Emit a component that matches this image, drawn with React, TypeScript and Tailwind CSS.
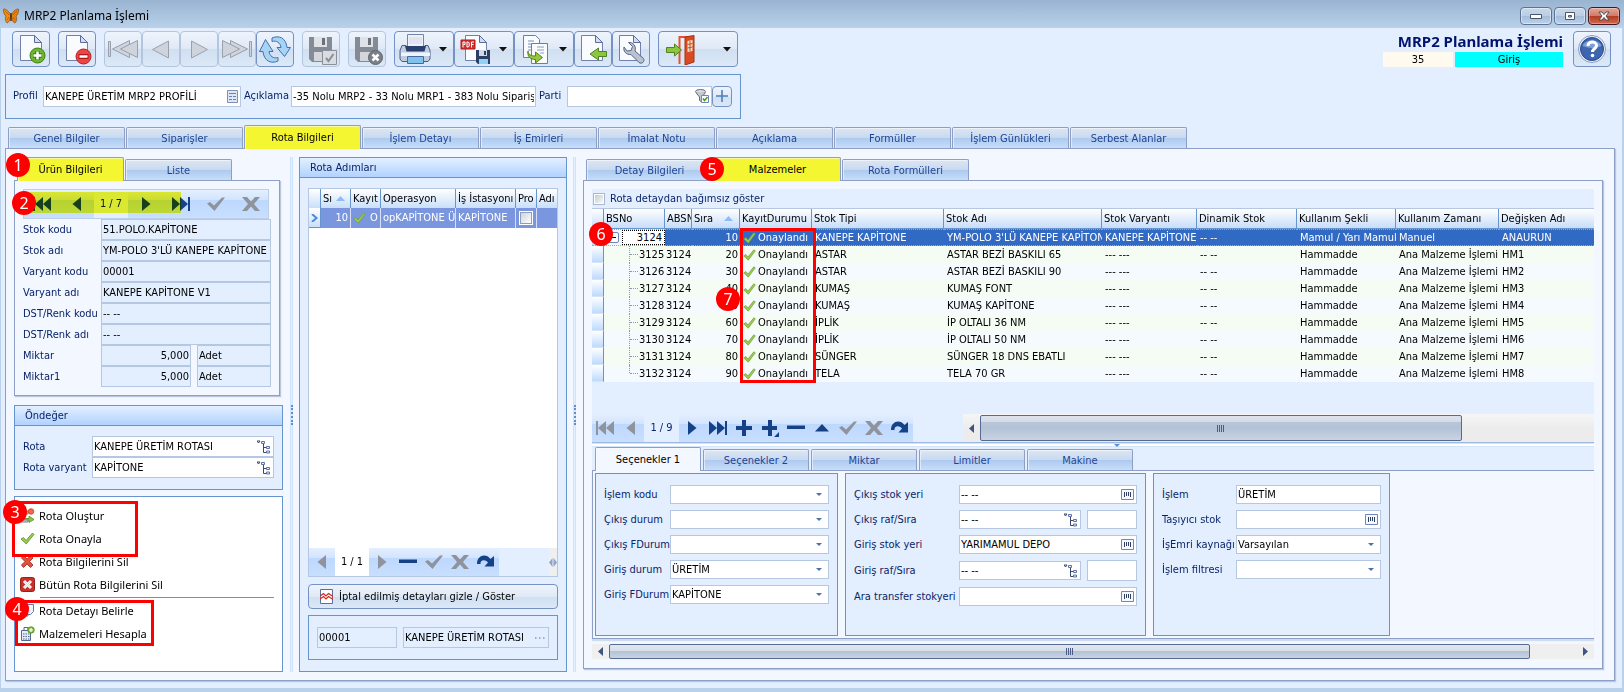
import { useId } from "react";
import type { ReactNode } from "react";

const MAIN_TABS = [
  "Genel Bilgiler",
  "Siparişler",
  "Rota Bilgileri",
  "İşlem Detayı",
  "İş Emirleri",
  "İmalat Notu",
  "Açıklama",
  "Formüller",
  "İşlem Günlükleri",
  "Serbest Alanlar",
];

const PRODUCT_FIELDS = [
  { label: "Stok kodu", value: "51.POLO.KAPİTONE" },
  { label: "Stok adı", value: "YM-POLO 3'LÜ KANEPE KAPİTONE" },
  { label: "Varyant kodu", value: "00001" },
  { label: "Varyant adı", value: "KANEPE KAPİTONE V1" },
  { label: "DST/Renk kodu", value: "-- --" },
  { label: "DST/Renk adı", value: "-- --" },
  { label: "Miktar", value: "5,000", unit: "Adet" },
  { label: "Miktar1", value: "5,000", unit: "Adet" },
];

const COLUMNS = [
  { label: "BSNo", width: "w-[61px]" },
  { label: "ABSN", width: "w-[27px]" },
  { label: "Sıra", width: "w-[48px]", sorted: true },
  { label: "KayıtDurumu", width: "w-[72px]" },
  { label: "Stok Tipi", width: "w-[132px]" },
  { label: "Stok Adı", width: "w-[158px]" },
  { label: "Stok Varyantı", width: "w-[95px]" },
  { label: "Dinamik Stok", width: "w-[100px]" },
  { label: "Kullanım Şekli", width: "w-[99px]" },
  { label: "Kullanım Zamanı", width: "w-[103px]" },
  { label: "Değişken Adı", width: "" },
];

const MATERIALS = [
  { no: "3125", order: 20, type: "ASTAR", name: "ASTAR BEZİ BASKILI 65", variable: "HM1" },
  { no: "3126", order: 30, type: "ASTAR", name: "ASTAR BEZİ BASKILI 90", variable: "HM2" },
  { no: "3127", order: 40, type: "KUMAŞ", name: "KUMAŞ FONT", variable: "HM3" },
  { no: "3128", order: 50, type: "KUMAŞ", name: "KUMAŞ KAPİTONE", variable: "HM4" },
  { no: "3129", order: 60, type: "İPLİK", name: "İP OLTALI 36 NM", variable: "HM5" },
  { no: "3130", order: 70, type: "İPLİK", name: "İP OLTALI 50 NM", variable: "HM6" },
  { no: "3131", order: 80, type: "SÜNGER", name: "SÜNGER 18 DNS EBATLI", variable: "HM7" },
  { no: "3132", order: 90, type: "TELA", name: "TELA 70 GR", variable: "HM8" },
];

/* ---------- icons ---------- */

function Svg({ w, h = w, children }: { w: number; h?: number; children: ReactNode }) {
  return (
    <svg width={w} height={h} viewBox={`0 0 ${w} ${h}`} className="shrink-0" aria-hidden="true">
      {children}
    </svg>
  );
}

function ButterflyIcon() {
  return (
    <Svg w={16}>
      <path d="M7.5 7C6 3 3 .8.6 1c-.4 3 .6 6.200 2.400 7C1.800 9.800 2.200 13.500 4 15c2-.6 3.200-3.500 3.500-6z" fill="#f08c10" stroke="#7a3c08" strokeWidth=".6" />
      <path d="M8.500 7C10 3 13 .8 15.400 1c.4 3-.6 6.200-2.400 7 1.200 1.800.8 5.500-1 7-2-.6-3.200-3.500-3.500-6z" fill="#e88010" stroke="#7a3c08" strokeWidth=".6" />
      <path d="M2 3l4 4M14 3l-4 4M4 12l2-3M12 12l-2-3" stroke="#c4610c" />
      <path d="M8 5v8" stroke="#4a2404" strokeWidth="1.400" />
    </Svg>
  );
}

function Page({ x = 0 }: { x?: number }) {
  return (
    <g transform={`translate(${x} 0)`}>
      <path d="M5.500 2.500h14l7 7v18h-21z" fill="#f9fbff" stroke="#7181ab" />
      <path d="M19.500 2.500v7h7z" fill="#d5dded" stroke="#5c6d9c" strokeLinejoin="round" />
    </g>
  );
}

function AddPageIcon() {
  return (
    <Svg w={32}>
      <Page />
      <circle cx="22.500" cy="22.500" r="7.500" fill="#6fb52d" stroke="#3e7d14" />
      <path d="M22.500 18v9M18 22.500h9" stroke="#3e7d14" strokeWidth="4.500" />
      <path d="M22.500 18.500v8M18.500 22.500h8" stroke="#fff" strokeWidth="2.500" />
    </Svg>
  );
}

function RemovePageIcon() {
  return (
    <Svg w={32}>
      <Page />
      <circle cx="22.500" cy="23.500" r="7.500" fill="#ef4444" stroke="#b81e1e" />
      <path d="M17.500 23.500h10" stroke="#b01818" strokeWidth="5" />
      <path d="M18.500 23.500h8" stroke="#fff" strokeWidth="2.500" />
    </Svg>
  );
}

function SeekIcon({ kind }: { kind: "first" | "prev" | "next" | "last" }) {
  const flip = kind === "next" || kind === "last";
  const double = kind === "first" || kind === "last";
  return (
    <Svg w={32}>
      <g transform={flip ? "translate(32 0) scale(-1 1)" : undefined} fill="#cfd4dc" stroke="#9aa0ad" strokeLinejoin="round">
        {double ? (
          <>
            <path d="M1.500 8.500h2v15h-2z" />
            <path d="M22.500 7.500v17l-17-8.500z" />
            <path d="M30.500 7.500v17l-17-8.500z" />
          </>
        ) : (
          <path d="M23.500 8v17L7.500 16.500z" />
        )}
      </g>
    </Svg>
  );
}

function RefreshIcon() {
  return (
    <Svg w={32}>
      <g fill="#a9d3f2" stroke="#3f72b5" strokeLinejoin="round">
        <path d="M13 5c6.500-3 14-.500 15 9.500h3.500l-6 9-7.500-9h4c-.5-4.500-4.500-7.500-9-6z" />
        <path d="M19 28c-6.500 3-14 .5-15-9.500H.5l6-12 7.500 12h-4c.5 4.500 4.500 7.500 9 6z" />
      </g>
    </Svg>
  );
}

function DisabledSaveIcon({ cancel }: { cancel?: boolean }) {
  return (
    <Svg w={32}>
      <path d="M4 4h23v25H7l-3-3z" fill="#858b95" />
      <path d="M9 4h13v10H9z" fill="#dfe2e7" />
      <path d="M17 5h3v7h-3z" fill="#6c727c" />
      <path d="M9 19h14v9H9z" fill="#d3d7dd" />
      {cancel ? (
        <>
          <circle cx="24.500" cy="24.500" r="7" fill="#7b7f87" stroke="#62666e" />
          <path d="M21.500 21.500l6 6M27.500 21.500l-6 6" stroke="#fff" strokeWidth="2.500" />
        </>
      ) : (
        <>
          <path d="M17.500 17.500h14v14h-14z" fill="#d9dce1" stroke="#8a8f98" />
          <path d="M21 25l2.500 3 5-7" fill="none" stroke="#8a8f98" strokeWidth="2" />
        </>
      )}
    </Svg>
  );
}

function PrinterIcon() {
  return (
    <Svg w={32}>
      <path d="M8.500 1.500h16v13h-16z" fill="#eef1f8" stroke="#7483a8" />
      <path d="M10 4h13v7H10z" fill="#dfe4f0" />
      <path d="M3 12.500h4l1 4h17l1-4h3l2 5v8.500l-2 2.500H3l-2-2.500v-8.500z" fill="#c2ccdf" stroke="#4b5d87" />
      <path d="M6 13h21l-1.500 5.500H7.500z" fill="#28406f" />
      <path d="M2 19.500h29v3.500H2z" fill="#eff3fa" />
      <path d="M8.500 23.500h16v7h-16z" fill="#7fc2ee" stroke="#47689c" />
    </Svg>
  );
}

function PdfSaveIcon() {
  return (
    <Svg w={32}>
      <Page x={1} />
      <path d="M2 7h14v9H2z" fill="#d7302c" stroke="#a81a18" />
      <path d="M4 14.500v-5.500h2v2.500H4.500M8 9v5h1.200l1-1v-3l-1-1zM12.500 14.500V9H15M12.500 11.500h2" fill="none" stroke="#fff" />
      <path d="M17 17h14v14H19l-2-2z" fill="#2b3f66" />
      <path d="M20 17h8v6h-8z" fill="#cfd9ea" />
      <path d="M25 18h2v4h-2z" fill="#2b3f66" />
      <path d="M20 26h9v5h-9z" fill="#8fd0f5" />
    </Svg>
  );
}

function CopyIcon() {
  return (
    <Svg w={32}>
      <path d="M4.500 2.500h12l4 4v18h-16z" fill="#f9fbff" stroke="#6c7dab" />
      <path d="M9 8h6M9 11h6M9 14h6M9 17h6" stroke="#7d8fb8" />
      <path d="M12.500 10.500h16v20h-16z" fill="#f9fbff" stroke="#6c7dab" />
      <path d="M18 14h7M18 17h7M21 20h4" stroke="#8b9bc2" />
      <path d="M9 18c0 3.500 3 5 7.500 5v-4l7 5.500-7 5.500v-3.500c-5 0-8.500-3-7.500-8.500z" fill="#97c83a" stroke="#56851a" strokeLinejoin="round" />
    </Svg>
  );
}

function ImportIcon() {
  return (
    <Svg w={32}>
      <Page x={-1} />
      <path d="M13 21l8.500-6v3.500h8v5h-8V27z" fill="#8cc63f" stroke="#4f8320" strokeLinejoin="round" />
    </Svg>
  );
}

function WrenchIcon() {
  return (
    <Svg w={32}>
      <Page x={-1} />
      <path d="M9 14c-1 4 2 8 7 7.500l8 8c3 2 6-1 4.500-4l-8.500-7.500c1.500-5-2-9-6.500-8.500l4 4-1.500 4-4 .5z" fill="#b9c2d3" stroke="#56637f" strokeLinejoin="round" />
    </Svg>
  );
}

function ExitIcon() {
  return (
    <Svg w={32}>
      <path d="M14.500 31V4h13" fill="none" stroke="#e2552e" strokeWidth="2" />
      <path d="M20 4l9-1.500V29l-9 3z" fill="#d94a22" stroke="#a8330f" />
      <path d="M22.500 8l5-1v11l-5 1z" fill="#f4dfc7" />
      <path d="M25 8v10M22.500 11.500l5-1M22.500 15l5-1" stroke="#b9552f" />
      <path d="M1.500 14.500h8V11l7 6-7 6v-3.500h-8z" fill="#8cc63f" stroke="#4f8320" strokeLinejoin="round" />
    </Svg>
  );
}

function HelpIcon() {
  return (
    <Svg w={32}>
      <circle cx="16" cy="16" r="13.500" fill="#eef3fb" stroke="#8a9cc4" />
      <circle cx="16" cy="16" r="11.500" fill="#3e66b0" stroke="#27498c" />
      <path d="M6.500 13a10 8 0 0 1 19 0q-9.500 4-19 0z" fill="#7d9fd8" />
      <path d="M12 13c0-5.500 8.500-5 8.500-.5 0 3-4 3-4 6.500" fill="none" stroke="#fff" strokeWidth="3" />
      <circle cx="16.500" cy="22.500" r="1.800" fill="#fff" />
    </Svg>
  );
}

function GreenCheck() {
  return (
    <Svg w={13} h={12}>
      <path d="M.8 7l2-1.500L5 8 10.800.8l1.500 1L5.300 11.200z" fill="#9acb4e" stroke="#6f9f3a" strokeWidth=".7" strokeLinejoin="round" />
    </Svg>
  );
}

function TreeIcon() {
  return (
    <Svg w={14} h={14}>
      <path d="M0 1h3L1.500 3zM6.500 4v8.500H9M6.500 7.500H9" fill="none" stroke="#39486b" />
      <path d="M4.500 1.500h3v2h-3zM9.500 6.500h3v2h-3zM9.500 11h3v2h-3z" fill="#e8eefa" stroke="#5e73a8" />
    </Svg>
  );
}

function BarcodeIcon() {
  return (
    <Svg w={13} h={11}>
      <path d="M.5.5h12v10H.5z" fill="#f4f8ff" stroke="#6f86bd" />
      <path d="M3.500 3v5M5.500 3v4M7.500 3v4M9.500 3v5" stroke="#2f3d60" />
    </Svg>
  );
}

function ListIcon() {
  return (
    <Svg w={11} h={13}>
      <path d="M.5.5h10v12H.5z" fill="#dde6f6" stroke="#7e8fb8" />
      <path d="M2 3.500h7M2 6.500h3M6 6.500h3M2 9.500h3M6 9.500h3" stroke="#6d80b0" />
    </Svg>
  );
}

function FilterIcon() {
  return (
    <Svg w={14} h={14}>
      <ellipse cx="5.500" cy="2.500" rx="5" ry="2" fill="#d9dde4" stroke="#666c78" />
      <path d="M.8 3.500L4.500 8v3.500L7 13V8l3.500-4.500" fill="#c3c9d3" stroke="#666c78" />
      <path d="M6.500 6.500h7v7h-7z" fill="#fff" stroke="#6f86bd" />
      <path d="M8 9.500l1.500 2 3-3.500" fill="none" stroke="#4c9a1c" strokeWidth="1.500" />
    </Svg>
  );
}

function ZigzagIcon() {
  return (
    <Svg w={13} h={15}>
      <path d="M.5.500h12v14H.500z" fill="#fff" stroke="#5d7099" />
      <path d="M0 7l3.500-2.500L6 7l2.500-2.500L13 7.500M0 10l3.500-2.500L6 10l2.500-2.500L13 10.500" fill="none" stroke="#d32a20" strokeWidth="1.200" />
    </Svg>
  );
}

const MENU_ICONS = {
  create: (
    <Svg w={15}>
      <path d="M1 3h7v3H1zM1 11h7v3H1z" fill="#c9d4e8" stroke="#6d7fa8" />
      <circle cx="11" cy="3.500" r="2.800" fill="#f26a3d" stroke="#b93a17" strokeWidth=".7" />
      <path d="M1 10.500h8V8l5 3.500-5 3V12H1z" fill="#8cc63f" stroke="#4f8320" strokeWidth=".7" />
    </Svg>
  ),
  approve: (
    <Svg w={15}>
      <path d="M1 8l2.500-1.500L6 9.500 12.500 2 14 3.500 6.200 13z" fill="#9acb4e" stroke="#5f8f2a" strokeWidth=".8" strokeLinejoin="round" />
    </Svg>
  ),
  remove: (
    <Svg w={15}>
      <path d="M3.500 1.500L7 5l4-3.500L13 4 9.500 7.500 13 11l-2.500 2.500L7 10l-3.500 3.500L1.500 11 5 7.500 1.500 4z" fill="#e0523e" stroke="#a3210f" strokeWidth=".8" strokeLinejoin="round" />
    </Svg>
  ),
  removeAll: (
    <Svg w={15}>
      <rect x=".5" y=".5" width="14" height="14" rx="2" fill="#c9302a" stroke="#96201b" />
      <path d="M4 4l7 7M11 4l-7 7" stroke="#fff" strokeWidth="3" />
      <path d="M4.500 4.500l6 6M10.500 4.500l-6 6" stroke="#cfd6e6" />
    </Svg>
  ),
  detail: (
    <Svg w={15}>
      <path d="M1 5h7v8H1zM4 3h7v8H4z" fill="#dce6f7" stroke="#5f78ad" />
      <path d="M7.500 1.500h6v7l-3 3h-3z" fill="#eef3fc" stroke="#5f78ad" />
    </Svg>
  ),
  calculate: (
    <Svg w={15}>
      <path d="M1.500 4.500h9v10h-9z" fill="#e5ecf8" stroke="#556890" />
      <path d="M4 1.500h4v3H4z" fill="#fff" stroke="#556890" />
      <path d="M3 8h1.500M5.500 8H7M8 8h1.500M3 10.500h1.500M5.500 10.500H7M8 10.500h1.500M3 13h1.500M5.500 13H7M8 13h1.500" stroke="#556890" />
      <circle cx="11" cy="4" r="3.300" fill="#7cbb36" stroke="#4d861b" strokeWidth=".7" />
      <path d="M11 2v4M9 4h4" stroke="#fff" strokeWidth="1.200" />
    </Svg>
  ),
};

type NavKind = "first" | "prev" | "next" | "last" | "add" | "addChild" | "minus" | "up" | "check" | "cancel" | "redo";

const NAV_SHAPES: Record<NavKind, ReactNode> = {
  first: <path d="M0 2h2v14H0zM10 2v14L2 9zM18 2v14L10 9z" />,
  prev: <path d="M13 2v14L4.500 9z" />,
  next: <path d="M5 2v14l8.500-7z" />,
  last: <path d="M18 2h-2v14h2zM8 2v14l8-7zM0 2v14l8-7z" />,
  add: <path d="M7 1h4v6h6v4h-6v6H7v-6H1V7h6z" />,
  addChild: <path d="M7 1h4v6h5v4h-5v6H7v-6H1V7h6zM18 13v5h-5z" />,
  minus: <path d="M0 6.500h18v3.500H0z" />,
  up: <path d="M2 12.500L9 5l7 7.500z" />,
  check: <path d="M0 8.500l3-1.500 4 3.500L15 2.500h3L7.500 16z" />,
  cancel: <path d="M0 2h5l4 4.500L13 2h5l-6 7 6 7h-5l-4-4.500L5 16H0l6-7z" />,
  redo: <path d="M0 11C0 2 9 0 13.500 6L17 3v10.500H7.500L11 9.500C8 6 3 7 3.500 11z" />,
};

function NavIcon({ kind }: { kind: NavKind }) {
  return <Svg w={18}>{NAV_SHAPES[kind]}</Svg>;
}

/* ---------- controls ---------- */

function ToolButton({
  label,
  children,
  disabled,
  menu,
}: {
  label: string;
  children: ReactNode;
  disabled?: boolean;
  menu?: boolean;
}) {
  return (
    <button
      aria-label={label}
      disabled={disabled}
      className={`flex h-9 items-center rounded-sm border bg-[linear-gradient(#eef4fc,#dfe9f6_50%,#cfdff2_50%,#dce8f7)] ${
        menu ? "w-[60px] justify-between pr-1.5 pl-1" : "w-[38px] justify-center"
      } ${disabled ? "border-[#b4c5de]" : "border-[#7592c2]"}`}
    >
      {children}
      {menu && <Caret />}
    </button>
  );
}

function Caret() {
  return (
    <Svg w={8} h={5}>
      <path d="M0 0h8L4 4.500z" fill="#111" />
    </Svg>
  );
}

function Tab({ label, active, marked, width }: { label: string; active?: boolean; marked?: boolean; width: string }) {
  const look = active
    ? `relative -mb-px h-6 text-black ${marked ? "bg-[#f5f632]" : "bg-[#f3f7ff]"}`
    : "h-[21px] bg-[linear-gradient(#dce6f4,#c8d9ef_50%,#acc9ef_50%,#c8defa)] pt-0.5 text-[#1e4395]";
  return (
    <button
      role="tab"
      aria-selected={!!active}
      className={`shrink-0 rounded-t-[2px] border border-b-0 border-[#8d9fc6] shadow-[inset_1px_1px_0_#ffffff80] ${look} ${width}`}
    >
      {label}
    </button>
  );
}

function Box({ children, width, readOnly }: { children: ReactNode; width: string; readOnly?: boolean }) {
  return (
    <div className={`flex min-w-0 items-center border border-[#b5c7e1] ${readOnly ? "bg-[#e3efff]" : "bg-white"} ${width}`}>
      {children}
    </div>
  );
}

function TextInput({
  id,
  label,
  value = "",
  width,
  height = "h-[21px]",
  icon,
  readOnly,
  right,
}: {
  id?: string;
  label?: string;
  value?: string;
  width: string;
  height?: string;
  icon?: ReactNode;
  readOnly?: boolean;
  right?: boolean;
}) {
  return (
    <Box width={`${width} ${height}`} readOnly={readOnly}>
      <input
        id={id}
        aria-label={label}
        defaultValue={value}
        readOnly={readOnly}
        className={`h-full w-0 min-w-0 flex-1 bg-transparent px-px text-black outline-none ${right ? "text-right" : ""}`}
      />
      {icon && <span className="mr-0.5 ml-px">{icon}</span>}
    </Box>
  );
}

function SelectInput({ id, value = "", width }: { id: string; value?: string; width: string }) {
  return (
    <Box width={`relative h-[19px] ${width}`}>
      <select id={id} defaultValue={value} className="h-full w-full appearance-none bg-transparent px-px text-black outline-none">
        <option>{value}</option>
      </select>
      <span className="pointer-events-none absolute right-1.5">
        <Svg w={6} h={3}>
          <path d="M0 0h6L3 3z" fill="#4a72ad" />
        </Svg>
      </span>
    </Box>
  );
}

function Row({
  label,
  labelWidth,
  children,
}: {
  label: string;
  labelWidth: string;
  children: (id: string) => ReactNode;
}) {
  const id = useId();
  return (
    <div className="flex items-center">
      <label htmlFor={id} className={`shrink-0 whitespace-nowrap ${labelWidth}`}>
        {label}
      </label>
      {children(id)}
    </div>
  );
}

function NavButton({ kind, off, width }: { kind: NavKind; off?: boolean; width: string }) {
  return (
    <button
      aria-label={kind}
      disabled={off}
      className={`flex items-center justify-center bg-[linear-gradient(#e4efff,#d3e4fd_35%,#bdd8fe_36%,#c8dffe)] ${
        off ? "fill-[#8f949c]" : "fill-[#154287]"
      } ${width}`}
    >
      <NavIcon kind={kind} />
    </button>
  );
}

function Panel({ title, children, className }: { title: string; children: ReactNode; className: string }) {
  return (
    <section className={`flex flex-col border border-[#6594cf] bg-[#e3efff] ${className}`}>
      <h2 className="h-5 shrink-0 border-b border-[#6594cf] bg-[linear-gradient(#e3efff,#b1d3ff)] pl-2.5 leading-5">
        {title}
      </h2>
      {children}
    </section>
  );
}

function Splitter() {
  return (
    <div className="flex w-[3px] shrink-0 flex-col border-x border-[#cfe3fc] bg-[#e3efff] pt-[248px]">
      <div className="h-5 border-l-2 border-dotted border-[#5f8fcf]" />
    </div>
  );
}

function Grip() {
  return (
    <Svg w={8} h={7}>
      <path d="M.5 0v7M2.500 0v7M4.500 0v7M6.500 0v7" stroke="#4b5d87" />
    </Svg>
  );
}

function Arrow({ right }: { right?: boolean }) {
  return (
    <button aria-label={right ? "Sağ" : "Sol"} className="flex w-[17px] items-center justify-center">
      <Svg w={5} h={9}>
        <path d={right ? "M0 0v9l5-4.500z" : "M5 0v9L0 4.500z"} fill="#3f5480" />
      </Svg>
    </button>
  );
}

function SortMark() {
  return (
    <Svg w={9} h={5}>
      <path d="M0 5h9L4.500 0z" fill="#8fbcf5" />
    </Svg>
  );
}

function Badge({ n, place }: { n: number; place: string }) {
  return (
    <span
      className={`absolute z-20 flex size-6 items-center justify-center rounded-full bg-[#fe0000] [font-family:'Noto_Sans',sans-serif] text-base leading-none text-white ${place}`}
    >
      {n}
    </span>
  );
}

function Outline({ place }: { place: string }) {
  return <span className={`pointer-events-none absolute z-10 border-3 border-[#fe0000] ${place}`} />;
}

/* ---------- sections ---------- */

function TitleBar() {
  const button =
    "flex h-[18px] w-8 items-center justify-center rounded-sm border border-[#5d7391] bg-[linear-gradient(#c9d9eb,#b9cde4_50%,#a3bcd9_50%,#bdd2ea)] shadow-[inset_0_0_0_1px_#ffffff70]";
  return (
    <header className="flex h-7 items-center bg-[linear-gradient(#99b4d1,#b9d1ea)] pt-1 pr-1 pl-[3px] [font-family:'Noto_Sans',sans-serif] text-xs text-black">
      <ButterflyIcon />
      <h1 className="ml-[5px] flex-1">MRP2 Planlama İşlemi</h1>
      <div className="flex gap-0.5">
        <button aria-label="Küçült" className={button}>
          <Svg w={12} h={6}>
            <path d="M.5 1.500h11v4H.5z" fill="#fff" stroke="#4a5568" />
          </Svg>
        </button>
        <button aria-label="Büyüt" className={button}>
          <Svg w={12} h={10}>
            <path d="M1.500 1.500h9v7h-9z" fill="#fff" stroke="#4a5568" />
            <path d="M4.500 4.500h3v1.500h-3z" fill="#b9cde4" stroke="#4a5568" />
          </Svg>
        </button>
        <button
          aria-label="Kapat"
          className="flex h-[18px] w-8 items-center justify-center rounded-sm border border-[#4a1520] bg-[linear-gradient(#e3a596,#cf7a66_50%,#b03a20_50%,#cf6a4e)] shadow-[inset_0_0_0_1px_#ffffff50]"
        >
          <Svg w={12} h={10}>
            <path d="M1 1h3l2 2.500L8 1h3L8 5l3 4H8L6 6.500 4 9H1l3-4z" fill="#fff" stroke="#3d4458" strokeWidth=".9" />
          </Svg>
        </button>
      </div>
    </header>
  );
}

function Toolbar() {
  return (
    <div className="flex h-9 items-start pr-[11px] pl-[11px]">
      <div className="flex gap-2">
        <ToolButton label="Yeni"><AddPageIcon /></ToolButton>
        <ToolButton label="Sil"><RemovePageIcon /></ToolButton>
        <div className="flex">
          <ToolButton label="İlk" disabled><SeekIcon kind="first" /></ToolButton>
          <ToolButton label="Önceki" disabled><SeekIcon kind="prev" /></ToolButton>
          <ToolButton label="Sonraki" disabled><SeekIcon kind="next" /></ToolButton>
          <ToolButton label="Son" disabled><SeekIcon kind="last" /></ToolButton>
          <ToolButton label="Yenile"><RefreshIcon /></ToolButton>
        </div>
        <ToolButton label="Kaydet" disabled><DisabledSaveIcon /></ToolButton>
        <ToolButton label="Vazgeç" disabled><DisabledSaveIcon cancel /></ToolButton>
        <div className="flex">
          <ToolButton label="Yazdır" menu><PrinterIcon /></ToolButton>
          <ToolButton label="PDF" menu><PdfSaveIcon /></ToolButton>
          <ToolButton label="Kopyala" menu><CopyIcon /></ToolButton>
          <ToolButton label="Aktar"><ImportIcon /></ToolButton>
          <ToolButton label="Ayarlar"><WrenchIcon /></ToolButton>
        </div>
        <button
          aria-label="Çıkış"
          className="flex h-9 w-20 items-center justify-between rounded-sm border border-[#7592c2] bg-[linear-gradient(#eef4fc,#dfe9f6_50%,#cfdff2_50%,#dce8f7)] pr-1.5 pl-1.5"
        >
          <ExitIcon />
          <Caret />
        </button>
      </div>
      <div className="mr-2.5 ml-auto w-[180px] text-black">
        <p className="h-[21px] text-right [font-family:'Noto_Sans',sans-serif] text-[15px] leading-[21px] font-bold whitespace-nowrap text-[#00146e]">
          MRP2 Planlama İşlemi
        </p>
        <div className="flex gap-0.5 text-center leading-[15px]">
          <span className="w-[70px] bg-[#fffaf0]">35</span>
          <span className="flex-1 bg-[#00ffff]">Giriş</span>
        </div>
      </div>
      <ToolButton label="Yardım"><HelpIcon /></ToolButton>
    </div>
  );
}

function ProfileBar() {
  const id = useId();
  return (
    <div className="mt-[7px] ml-1 flex h-[45px] w-[736px] items-center border border-[#6594cf] px-[7px] pb-px">
      <label htmlFor={`${id}p`} className="w-[30px]">Profil</label>
      <TextInput id={`${id}p`} value="KANEPE ÜRETİM MRP2 PROFİLİ" width="w-[198px]" icon={<ListIcon />} />
      <label htmlFor={`${id}a`} className="ml-[3px] w-[47px] whitespace-nowrap">Açıklama</label>
      <TextInput id={`${id}a`} value="-35 Nolu MRP2 - 33 Nolu MRP1 - 383 Nolu Sipariş" width="w-[245px]" />
      <label htmlFor={`${id}r`} className="ml-[3px] w-7">Parti</label>
      <TextInput id={`${id}r`} width="w-[145px]" icon={<FilterIcon />} />
      <button
        aria-label="Ekle"
        className="flex h-[21px] w-5 items-center justify-center rounded-sm border border-[#7592c2] bg-[linear-gradient(#eef4fc,#dfe9f6_50%,#cfdff2_50%,#dce8f7)]"
      >
        <Svg w={12}>
          <path d="M6 0v12M0 6h12" stroke="#4a80bd" strokeWidth="1.600" />
        </Svg>
      </button>
    </div>
  );
}

function ProductPanel() {
  return (
    <div className="relative mr-[3px]">
      <div role="tablist" className="flex h-[23px] items-end gap-px pl-[3px]">
        <Tab label="Ürün Bilgileri" active marked width="w-[107px]" />
        <Tab label="Liste" width="w-[107px]" />
      </div>
      <div className="h-[216px] border border-[#8d9fc6] pt-2 pr-2 pl-2 shadow-[1px_1px_1px_#b9c6de]">
        <div className="relative mr-0.5 flex h-[30px] border border-[#bccfea]">
          <NavButton kind="first" width="flex-1" />
          <NavButton kind="prev" width="flex-1" />
          <span className="flex w-[34px] items-center justify-center bg-[#e3efff]">1 / 7</span>
          <NavButton kind="next" width="flex-1" />
          <NavButton kind="last" width="flex-1" />
          <NavButton kind="check" off width="flex-1" />
          <NavButton kind="cancel" off width="flex-1" />
          <span className="pointer-events-none absolute top-0.5 left-1.5 h-[21px] w-[151px] bg-[#f6f832] mix-blend-multiply" />
        </div>
        {PRODUCT_FIELDS.map((f) => (
          <Row key={f.label} label={f.label} labelWidth="w-[78px]">
            {(id) =>
              f.unit ? (
                <>
                  <TextInput id={id} value={f.value} width="w-[90px]" readOnly right />
                  <TextInput label={`${f.label} birimi`} value={f.unit} width="ml-1.5 w-[74px]" readOnly />
                </>
              ) : (
                <TextInput id={id} value={f.value} width="w-[170px]" readOnly />
              )
            }
          </Row>
        ))}
      </div>
      <Badge n={1} place="top-[-4px] left-[-8px]" />
      <Badge n={2} place="top-[34px] left-[-2px]" />
    </div>
  );
}

function MenuItem({ icon, label }: { icon: keyof typeof MENU_ICONS; label: string }) {
  return (
    <button className="flex h-[23px] items-center gap-1 pl-[5px]">
      {MENU_ICONS[icon]}
      {label}
    </button>
  );
}

function LeftColumn() {
  return (
    <div className="flex w-[269px] shrink-0 flex-col">
      <ProductPanel />
      <Panel title="Öndeğer" className="mt-[9px] h-[85px]">
        <div className="pt-2.5 pl-2">
          <Row label="Rota" labelWidth="w-[69px]">
            {(id) => <TextInput id={id} value="KANEPE ÜRETİM ROTASI" width="w-[182px]" icon={<TreeIcon />} />}
          </Row>
          <Row label="Rota varyant" labelWidth="w-[69px]">
            {(id) => <TextInput id={id} value="KAPİTONE" width="w-[182px]" icon={<TreeIcon />} />}
          </Row>
        </div>
      </Panel>
      <div className="relative mt-1.5 flex flex-1 flex-col border border-[#6594cf] bg-white pt-[7px] [font-family:'Noto_Sans',sans-serif] text-black">
        <MenuItem icon="create" label="Rota Oluştur" />
        <MenuItem icon="approve" label="Rota Onayla" />
        <MenuItem icon="remove" label="Rota Bilgilerini Sil" />
        <MenuItem icon="removeAll" label="Bütün Rota Bilgilerini Sil" />
        <div role="separator" className="mt-px mr-2 mb-px ml-[25px] h-px bg-[#6594cf]" />
        <MenuItem icon="detail" label="Rota Detayı Belirle" />
        <MenuItem icon="calculate" label="Malzemeleri Hesapla" />
        <Outline place="top-1 left-[-3px] h-14 w-[126px]" />
        <Outline place="top-[103px] left-0 h-[46px] w-[139px]" />
        <Badge n={3} place="top-[3px] left-[-12px]" />
        <Badge n={4} place="top-[100px] left-[-10px]" />
      </div>
    </div>
  );
}

function StepsColumn() {
  const th = "overflow-hidden border-r border-[#6594cf] pl-0.5 text-left font-normal whitespace-nowrap";
  const td = "overflow-hidden border-r border-white/70 pl-0.5 whitespace-nowrap";
  return (
    <Panel title="Rota Adımları" className="w-[268px] shrink-0">
      <div className="flex flex-1 flex-col px-2 pt-2.5 pb-[11px]">
        <div className="flex flex-1 flex-col border border-[#b5c7e1] bg-white text-black">
          <table className="w-full table-fixed border-separate border-spacing-0">
            <thead>
              <tr className="h-[19px] bg-[linear-gradient(#ffffff,#c9dffa)]">
                <th className={`w-3 ${th}`} />
                <th className={`w-[30px] ${th}`}>
                  <span className="flex items-center gap-1">Sı <SortMark /></span>
                </th>
                <th className={`w-[30px] ${th}`}>Kayıt</th>
                <th className={`w-[75px] ${th}`}>Operasyon</th>
                <th className={`w-[60px] ${th}`}>İş İstasyonı</th>
                <th className={`w-[21px] ${th}`}>Pro</th>
                <th className="pl-0.5 text-left font-normal">Adı</th>
              </tr>
            </thead>
            <tbody>
              <tr className="h-5 bg-[#7a96df] text-white">
                <td className="border-r border-b border-[#6594cf] bg-[linear-gradient(#ffffff,#c9dffa)] pl-0.5">
                  <Svg w={7} h={8}>
                    <path d="M1 0l4.500 4L1 8" fill="none" stroke="#4a8be0" strokeWidth="2" />
                  </Svg>
                </td>
                <td className={`${td} pr-0.5 text-right`}>10</td>
                <td className={td}>
                  <span className="flex items-center gap-1"><GreenCheck />O</span>
                </td>
                <td className={td}>opKAPİTONE Ü</td>
                <td className={td}>KAPİTONE</td>
                <td className={td}>
                  <input type="checkbox" aria-label="Pro" className="ml-0.5 block size-3 appearance-none border border-[#8d9fb8] bg-[linear-gradient(135deg,#cfd3da,#ffffff)] outline outline-white" />
                </td>
                <td />
              </tr>
            </tbody>
          </table>
          <div className="mt-auto flex h-7 bg-[#e3efff]">
            <NavButton kind="prev" off width="w-[26px]" />
            <span className="flex w-[34px] items-center justify-center bg-white">1 / 1</span>
            <NavButton kind="next" off width="w-[26px]" />
            <NavButton kind="minus" width="w-[26px]" />
            <NavButton kind="check" off width="w-[26px]" />
            <NavButton kind="cancel" off width="w-[26px]" />
            <NavButton kind="redo" width="w-[26px]" />
            <span className="ml-auto flex w-2 items-center bg-[#efefef]">
              <Svg w={8} h={9}>
                <path d="M3.500 0v9L0 4.500zM4.500 0v9L8 4.500z" fill="#8fa3cc" />
              </Svg>
            </span>
          </div>
        </div>
        <button className="mt-[7px] flex h-[25px] items-center gap-1.5 rounded-sm border border-[#7592c2] bg-[linear-gradient(#eef4fc,#dfe9f6_50%,#cfdff2_50%,#dce8f7)] pl-[11px] text-black">
          <ZigzagIcon />
          İptal edilmiş detayları gizle / Göster
        </button>
        <div className="mt-1.5 flex h-[45px] items-center gap-1.5 border border-[#6594cf] px-2">
          <TextInput label="Rota kodu" value="00001" width="w-20" readOnly />
          <TextInput
            label="Rota adı"
            value="KANEPE ÜRETİM ROTASI"
            width="flex-1"
            readOnly
            icon={
              <Svg w={12} h={2}>
                <path d="M1 1h1.500M5 1h1.500M9 1h1.500" stroke="#4a72ad" />
              </Svg>
            }
          />
        </div>
      </div>
    </Panel>
  );
}

function MaterialsTable() {
  const td = "overflow-hidden pl-[3px] whitespace-nowrap";
  const status = "flex items-center gap-0.5";
  const gutter = "border-r border-b border-r-[#6594cf] border-b-[#d3e4fb] bg-[linear-gradient(#ffffff,#bfdafd)]";
  return (
    <div className="relative">
      <table className="w-full table-fixed border-separate border-spacing-0 text-black">
        <thead>
          <tr className="h-5 bg-[linear-gradient(#ffffff,#c4dbfa)]">
            <th className="w-3 border-r border-b border-[#6594cf]" />
            {COLUMNS.map((c, i) => (
              <th
                key={c.label}
                className={`overflow-hidden border-b border-[#6594cf] pl-0.5 text-left font-normal whitespace-nowrap ${
                  i < COLUMNS.length - 1 ? "border-r" : ""
                } ${c.width}`}
              >
                {c.sorted ? (
                  <span className="flex items-center justify-between pr-1.5">
                    {c.label} <SortMark />
                  </span>
                ) : (
                  c.label
                )}
              </th>
            ))}
          </tr>
        </thead>
        <tbody className="leading-[15px]">
          <tr className="h-[17px] bg-[#316ac5] text-white [&>td]:border-y [&>td]:border-dotted [&>td]:border-[#e0a040]">
            <td className="bg-[#bfdafd]" />
            <td className="overflow-hidden bg-[#f3f7ff] text-black">
              <span className="flex items-center">
                <button aria-label="Daralt" className="ml-1 size-[11px] shrink-0 rounded-[2px] border border-[#6d86b5] bg-white">
                  <span className="mx-auto block h-px w-[5px] bg-black" />
                </button>
                <span className="ml-[3px] flex-1 border border-dotted border-black bg-white pr-0.5 text-right leading-[13px]">3124</span>
              </span>
            </td>
            <td />
            <td className="pr-0.5 text-right">10</td>
            <td className={td}>
              <span className={status}><GreenCheck />Onaylandı</span>
            </td>
            <td className={td}>KANEPE KAPİTONE</td>
            <td className={td}>YM-POLO 3'LÜ KANEPE KAPİTON</td>
            <td className={td}>KANEPE KAPİTONE</td>
            <td className={td}>-- --</td>
            <td className={td}>Mamul / Yarı Mamul</td>
            <td className={td}>Manuel</td>
            <td className={td}>ANAURUN</td>
          </tr>
          {MATERIALS.map((m, i) => (
            <tr key={m.no} className="h-[17px] odd:bg-[#f5faff] even:bg-[#f4fcf3]">
              <td className={gutter} />
              <td className="overflow-hidden whitespace-nowrap">
                <span className="flex">
                  <span className={`ml-[25px] border-l border-dotted border-[#7f9cc9] ${i === MATERIALS.length - 1 ? "h-2" : "h-[17px]"}`} />
                  <span className="mt-2 w-2 border-t border-dotted border-[#7f9cc9]" />
                  <span className="pl-px leading-[17px]">{m.no}</span>
                </span>
              </td>
              <td className="overflow-hidden pl-px">3124</td>
              <td className="pr-0.5 text-right">{m.order}</td>
              <td className={td}>
                <span className={status}><GreenCheck />Onaylandı</span>
              </td>
              <td className={td}>{m.type}</td>
              <td className={td}>{m.name}</td>
              <td className={td}>--- ---</td>
              <td className={td}>-- --</td>
              <td className={td}>Hammadde</td>
              <td className={td}>Ana Malzeme İşlemi</td>
              <td className={td}>{m.variable}</td>
            </tr>
          ))}
        </tbody>
      </table>
      <Outline place="top-[19px] left-[148px] h-[155px] w-[76px]" />
      <Badge n={6} place="top-[13px] left-[-3px]" />
      <Badge n={7} place="top-[78px] left-[124px]" />
    </div>
  );
}

function OptionGroup({ children, width }: { children: ReactNode; width: string }) {
  return (
    <div className={`flex h-[163px] shrink-0 flex-col gap-1.5 border border-[#6594cf] bg-[#e3efff] px-2 pt-[11px] ${width}`}>
      {children}
    </div>
  );
}

function Options() {
  return (
    <div className="flex gap-[7px] border-y border-l border-[#8d9fc6] bg-[#f3f7ff] p-0.5 shadow-[0_2px_1px_#cfdcee]">
      <OptionGroup width="w-[243px]">
        <Row label="İşlem kodu" labelWidth="w-[66px]">{(id) => <SelectInput id={id} width="flex-1" />}</Row>
        <Row label="Çıkış durum" labelWidth="w-[66px]">{(id) => <SelectInput id={id} width="flex-1" />}</Row>
        <Row label="Çıkış FDurum" labelWidth="w-[66px]">{(id) => <SelectInput id={id} width="flex-1" />}</Row>
        <Row label="Giriş durum" labelWidth="w-[66px]">{(id) => <SelectInput id={id} value="ÜRETİM" width="flex-1" />}</Row>
        <Row label="Giriş FDurum" labelWidth="w-[66px]">{(id) => <SelectInput id={id} value="KAPİTONE" width="flex-1" />}</Row>
      </OptionGroup>
      <OptionGroup width="w-[301px]">
        <Row label="Çıkış stok yeri" labelWidth="w-[105px]">
          {(id) => <TextInput id={id} value="-- --" width="flex-1" height="h-[19px]" icon={<BarcodeIcon />} />}
        </Row>
        <Row label="Çıkış raf/Sıra" labelWidth="w-[105px]">
          {(id) => (
            <>
              <TextInput id={id} value="-- --" width="flex-1" height="h-[19px]" icon={<TreeIcon />} />
              <TextInput label="Çıkış sıra" width="ml-1.5 w-[50px]" height="h-[19px]" />
            </>
          )}
        </Row>
        <Row label="Giriş stok yeri" labelWidth="w-[105px]">
          {(id) => <TextInput id={id} value="YARIMAMUL DEPO" width="flex-1" height="h-[19px]" icon={<BarcodeIcon />} />}
        </Row>
        <Row label="Giriş raf/Sıra" labelWidth="w-[105px]">
          {(id) => (
            <>
              <TextInput id={id} value="-- --" width="flex-1" height="h-[19px]" icon={<TreeIcon />} />
              <TextInput label="Giriş sıra" width="ml-1.5 w-[50px]" height="h-[21px]" />
            </>
          )}
        </Row>
        <Row label="Ara transfer stokyeri" labelWidth="w-[105px]">
          {(id) => <TextInput id={id} width="flex-1" height="h-[19px]" icon={<BarcodeIcon />} />}
        </Row>
      </OptionGroup>
      <OptionGroup width="w-[237px]">
        <Row label="İşlem" labelWidth="w-[74px]">
          {(id) => <TextInput id={id} value="ÜRETİM" width="flex-1" height="h-[19px]" />}
        </Row>
        <Row label="Taşıyıcı stok" labelWidth="w-[74px]">
          {(id) => <TextInput id={id} width="flex-1" height="h-[19px]" icon={<BarcodeIcon />} />}
        </Row>
        <Row label="İşEmri kaynağı" labelWidth="w-[74px]">{(id) => <SelectInput id={id} value="Varsayılan" width="flex-1" />}</Row>
        <Row label="İşlem filtresi" labelWidth="w-[74px]">{(id) => <SelectInput id={id} width="flex-1" />}</Row>
      </OptionGroup>
    </div>
  );
}

function DetailColumn() {
  return (
    <div className="relative mb-[3px] flex min-w-0 flex-1 flex-col">
      <div role="tablist" className="flex h-[23px] items-end gap-px pl-[3px]">
        <Tab label="Detay Bilgileri" width="w-[127px]" />
        <Tab label="Malzemeler" active marked width="w-[127px]" />
        <Tab label="Rota Formülleri" width="w-[127px]" />
      </div>
      <Badge n={5} place="top-0 left-[117px]" />
      <div className="flex flex-1 flex-col border border-[#8d9fc6] px-2 pt-2 pb-[9px] shadow-[1px_1px_1px_#b9c6de]">
        <div className="flex flex-1 flex-col bg-[#e3efff]">
          <label className="flex h-5 items-center gap-[5px] border-b border-[#b5c7e1] pt-px pl-px">
            <input
              type="checkbox"
              className="size-3 appearance-none border border-[#a9b8cf] bg-[linear-gradient(135deg,#bfc4cc,#ffffff)] shadow-[inset_0_0_0_1px_#ffffff]"
            />
            Rota detaydan bağımsız göster
          </label>
          <MaterialsTable />
          <div className="mt-auto flex h-[29px] items-stretch border-b border-[#9db9dd]">
            <NavButton kind="first" off width="w-[26px]" />
            <NavButton kind="prev" off width="w-[26px]" />
            <span className="flex w-[35px] items-center justify-center">1 / 9</span>
            <NavButton kind="next" width="w-[26px]" />
            <NavButton kind="last" width="w-[26px]" />
            <NavButton kind="add" width="w-[26px]" />
            <NavButton kind="addChild" width="w-[26px]" />
            <NavButton kind="minus" width="w-[26px]" />
            <NavButton kind="up" width="w-[26px]" />
            <NavButton kind="check" off width="w-[26px]" />
            <NavButton kind="cancel" off width="w-[26px]" />
            <NavButton kind="redo" width="w-[26px]" />
            <div className="ml-[50px] flex flex-1 bg-[linear-gradient(#f6f6f6,#ececec_50%)] py-px">
              <Arrow />
              <div className="flex flex-[482] items-center justify-center rounded-[2px] border border-[#566a96] bg-[linear-gradient(#dde3ea,#d5dce6_25%,#b9c6d9_26%,#b3c2d6_50%,#c9d4e2)]">
                <Grip />
              </div>
              <div className="flex-[132]" />
            </div>
          </div>
        </div>
        <div className="flex h-1 justify-center border-y border-[#d3e5fb] bg-white pl-12">
          <Svg w={6} h={3}>
            <path d="M0 0h6L3 3z" fill="#5f8fcf" />
          </Svg>
        </div>
        <div role="tablist" className="flex h-[23px] items-end gap-0.5 bg-[#e3efff] pl-[3px]">
          <Tab label="Seçenekler 1" active width="w-[106px]" />
          <Tab label="Seçenekler 2" width="w-[106px]" />
          <Tab label="Miktar" width="w-[106px]" />
          <Tab label="Limitler" width="w-[106px]" />
          <Tab label="Makine" width="w-[106px]" />
        </div>
        <Options />
        <div className="mt-[5px] flex h-[15px] bg-[#efefef]">
          <Arrow />
          <div className="flex flex-[922] items-center justify-center rounded-[2px] border border-[#566a96] bg-[linear-gradient(#e3e7ec,#d7dee7_45%,#b3c2d6_50%,#c9d4e2)]">
            <Grip />
          </div>
          <div className="flex-[47]" />
          <Arrow right />
        </div>
      </div>
    </div>
  );
}

export default function App() {
  return (
    <div className="flex min-h-screen flex-col bg-[#e3efff] [font-family:'DejaVu_Sans_Condensed','DejaVu_Sans',sans-serif] text-[11px] leading-4 text-[#0a246a]">
      <TitleBar />
      <div className="flex flex-1 flex-col border-r-2 border-b-4 border-l border-[#b9d1ea] pt-[3px] pb-[7px]">
        <Toolbar />
        <ProfileBar />
        <div role="tablist" className="mt-1.5 ml-[7px] flex h-[23px] shrink-0 items-end gap-px">
          {MAIN_TABS.map((t) => (
            <Tab key={t} label={t} active={t === "Rota Bilgileri"} marked width="w-[117px]" />
          ))}
        </div>
        <main className="mr-[7px] ml-1 flex flex-1 border border-[#8d9fc6] bg-[#f3f7ff] py-2 pr-[11px] pl-2 shadow-[1px_1px_1px_#b9c6de]">
          <LeftColumn />
          <div className="w-[7px] shrink-0" />
          <Splitter />
          <div className="w-1.5 shrink-0" />
          <StepsColumn />
          <div className="w-1.5 shrink-0" />
          <Splitter />
          <div className="w-[7px] shrink-0" />
          <DetailColumn />
        </main>
      </div>
    </div>
  );
}
